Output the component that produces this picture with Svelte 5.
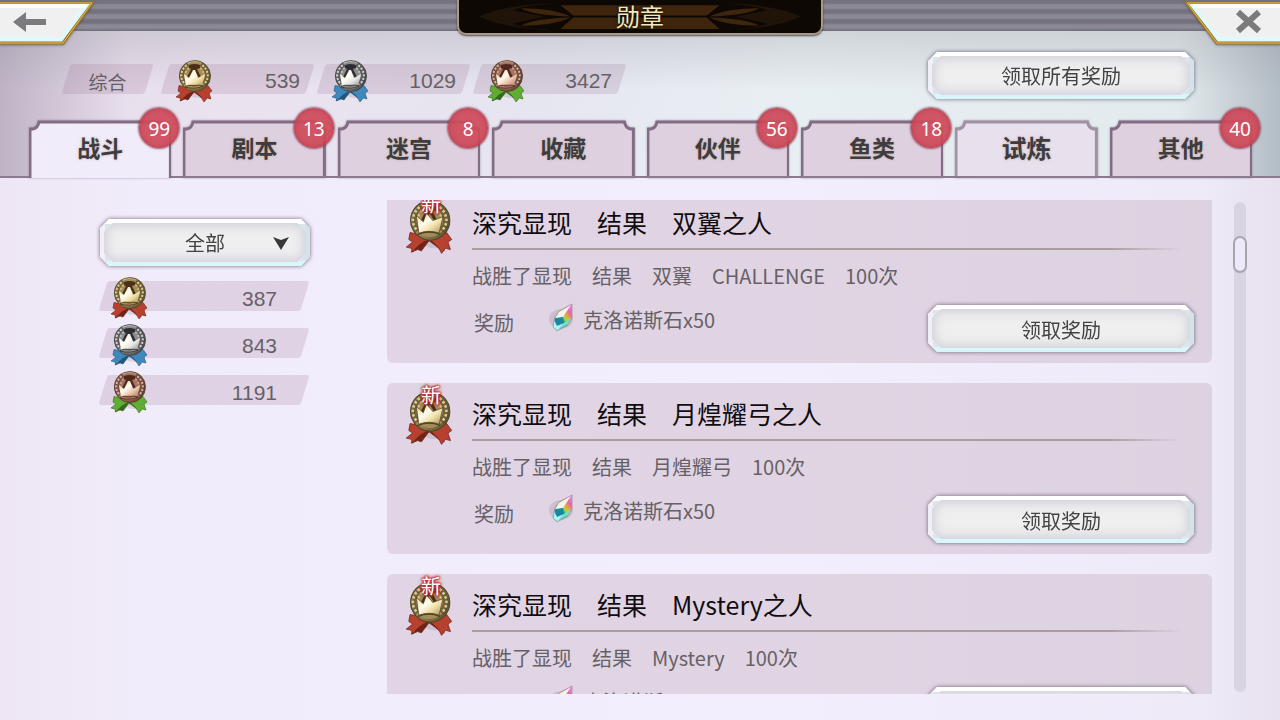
<script lang="ts">
	import { onMount } from "svelte";

	type Grade = "gold" | "silver" | "bronze";
	type Count = { grade: Grade; total: number };

	const totals: Count[] = [
		{ grade: "gold", total: 539 },
		{ grade: "silver", total: 1029 },
		{ grade: "bronze", total: 3427 },
	];

	const tabTotals: Count[] = [
		{ grade: "gold", total: 387 },
		{ grade: "silver", total: 843 },
		{ grade: "bronze", total: 1191 },
	];

	const tabs = [
		{ name: "战斗", unread: 99 },
		{ name: "剧本", unread: 13 },
		{ name: "迷宫", unread: 8 },
		{ name: "收藏", unread: 0 },
		{ name: "伙伴", unread: 56 },
		{ name: "鱼类", unread: 18 },
		{ name: "试炼", unread: 0, event: true },
		{ name: "其他", unread: 40 },
	];

	const medals = [
		{ title: "深究显现　结果　双翼之人", goal: "战胜了显现　结果　双翼　CHALLENGE　100次" },
		{ title: "深究显现　结果　月煌耀弓之人", goal: "战胜了显现　结果　月煌耀弓　100次" },
		{ title: "深究显现　结果　Mystery之人", goal: "战胜了显现　结果　Mystery　100次" },
	];

	const colors = {
		gold: { hi: "#f0dfa4", mid: "#a38c57", lo: "#4f4428", dark: "#4a3016", ribbon: "#b8402e", fold: "#6f2419" },
		silver: { hi: "#e6e6e6", mid: "#8b8b8b", lo: "#3c3c3e", dark: "#2e2e32", ribbon: "#3f88be", fold: "#235779" },
		bronze: { hi: "#ecc4ae", mid: "#a5735f", lo: "#54352b", dark: "#50291e", ribbon: "#5eae34", fold: "#35691c" },
	};

	let active = $state(0);
	let filter = $state("all");
	let list: HTMLElement;

	onMount(() => {
		list.scrollTop = 8;
	});
</script>

{#snippet medal(grade: Grade, big = false)}
	{@const c = colors[grade]}
	<svg class="medal" class:big viewBox="0 0 38 43" aria-hidden="true">
		<defs>
			<linearGradient id="disc-{grade}" x1="0" y1="0" x2="1" y2="1">
				<stop offset="0.1" stop-color={c.hi} />
				<stop offset="0.5" stop-color={c.mid} />
				<stop offset="1" stop-color={c.lo} />
			</linearGradient>
			<linearGradient id="crown-{grade}" x1="0" y1="0" x2="1" y2="1">
				<stop offset="0.1" stop-color={c.hi} />
				<stop offset="0.4" stop-color="#fffdf2" />
				<stop offset="0.65" stop-color={c.hi} />
				<stop offset="1" stop-color={c.mid} />
			</linearGradient>
		</defs>
		<ellipse cx="24" cy="32" rx="11" ry="6" fill="#54405c" opacity="0.14" />
		<g stroke={c.fold} stroke-width="0.6" stroke-linejoin="round">
			<path d="M18 30 L8 34 L5 41 L10 39 L13 40 L19 32Z" fill={c.fold} />
			<path d="M20 30 L28 33 L31 40 L27 38 L19 32Z" fill={c.fold} />
			<path d="M18 28 L4 25.500 L3 31 L6 33 L1 37 L5 38 L6 41 Q11 34 19 31Z" fill={c.ribbon} />
			<path d="M20 28 L33 25.500 L37 31 L34 33 L36 39 L32 38 L29 42 Q26 35 19 31Z" fill={c.ribbon} />
		</g>
		<circle cx="20" cy="16" r="15.500" fill="url(#disc-{grade})" stroke={c.lo} stroke-width="0.8" />
		<circle cx="19.500" cy="15.500" r="13.500" fill={c.mid} />
		<g fill="none">
			<path d="M10 24 C4 18 6 9 13 4 M29 24 C35 18 33 9 26 4" stroke={c.lo} stroke-width="5" opacity="0.6" />
			<path d="M9 23 C4 17 6 10 12 5 M30 23 C35 17 33 10 27 5" stroke={c.hi} stroke-width="2" stroke-dasharray="2 1.600" opacity="0.85" />
			<path d="M12 20 C9 16 10 10 15 7 M27 20 C30 16 29 10 24 7" stroke={c.hi} stroke-width="1.600" stroke-dasharray="1.800 2" opacity="0.7" />
		</g>
		<path d="M14 5 Q19.500 3 25 5 L25 8 L22 9 L26 17 L24 18 L20 11 L19 11 L14 18 L12 17 L16 9 L14 8Z" fill={c.dark} />
		{#if big}
			<path d="M9 12 L14.500 17 L17 10 L22 16 L30 13 L27 26 Q19 23 11 26Z" fill="url(#crown-{grade})" stroke={c.dark} stroke-width="0.5" />
			<path d="M10 27 Q19 23 28 27" fill="none" stroke={c.lo} stroke-width="1.200" />
		{:else}
			<path d="M9 14 L14 18 L18 10 H20 L23 18 L30 14 L27 26 Q19 23 11 26Z" fill="url(#crown-{grade})" />
			<path d="M10 27 Q13 24 19 26 Q24 24 28 26 Q20 30 10 27Z" fill={c.mid} stroke={c.dark} stroke-width="0.8" />
		{/if}
	</svg>
{/snippet}

<div class="page">
	<header>
		<div class="topbar">
			<button class="corner" aria-label="返回">
				<svg viewBox="0 0 96 46">
					<path d="M-4 3 H92 L63 43 H-4Z" fill="#f1f0f1" stroke="#9d7627" stroke-width="3" />
					<path d="M-4 3 H92 L63 43 H-4Z" fill="none" stroke="#e8bd4d" stroke-width="1" />
					<path d="M-4 6 H86 L61 39 H-4Z" fill="none" stroke="#dffafc" stroke-width="4" />
					<path d="M-4 6 H86" stroke="#fff" stroke-width="4" />
					<path d="M13 22 L26 12 V19 H46 V25 H26 V32Z" fill="#7b7b7d" />
				</svg>
			</button>
			<h1>
				<svg viewBox="0 0 364 32" preserveAspectRatio="none" aria-hidden="true">
					<g fill="#3f250c">
						<path d="M102 5 H262 L249 15 H115Z M115 17 H249 L262 28 H102Z" />
						<path d="M62 8 Q95 8 112 16 Q75 15 62 8Z M62 25 Q95 25 112 17 Q75 18 62 25Z" />
						<path d="M302 8 Q269 8 252 16 Q289 15 302 8Z M302 25 Q269 25 252 17 Q289 18 302 25Z" />
						<path d="M20 16 Q46 4 104 3 Q66 5 54 10 L86 16 L54 23 Q66 28 104 30 Q46 28 20 16Z" opacity="0.4" />
						<path d="M344 16 Q318 4 260 3 Q298 5 310 10 L278 16 L310 23 Q298 28 260 30 Q318 28 344 16Z" opacity="0.4" />
					</g>
				</svg>
				<span>勋章</span>
			</h1>
			<button class="corner" aria-label="关闭">
				<svg viewBox="0 0 96 46">
					<path d="M100 3 H3 L33 43 H100Z" fill="#f1f0f1" stroke="#9d7627" stroke-width="3" />
					<path d="M100 3 H3 L33 43 H100Z" fill="none" stroke="#e8bd4d" stroke-width="1" />
					<path d="M100 6 H9 L35 39 H100Z" fill="none" stroke="#dffafc" stroke-width="4" />
					<path d="M100 6 H9" stroke="#fff" stroke-width="4" />
					<path d="M54 12 L75 31 M75 12 L54 31" stroke="#7b7b7d" stroke-width="6" />
				</svg>
			</button>
		</div>

		<div class="summary">
			<span class="slant overall">综合</span>
			{#each totals as t}
				<span class="slant count">{@render medal(t.grade)}{t.total}</span>
			{/each}
			<button class="bevel claim">领取所有奖励</button>
		</div>

		<nav>
			{#each tabs as tab, i}
				<button class="tab" class:active={active === i} class:event={tab.event} onclick={() => (active = i)}>
					<svg viewBox="0 0 143 58" preserveAspectRatio="none" aria-hidden="true">
						<path d="M1 59 V9 H4 Q9 8 10 2 H133 Q134 8 139 9 H142 V59" />
					</svg>
					<span class="tab-name">{tab.name}</span>
					{#if tab.unread}
						<span class="unread">{tab.unread}</span>
					{/if}
				</button>
			{/each}
		</nav>
	</header>

	<main>
		<aside>
			<div class="bevel filter">
				<select bind:value={filter} aria-label="筛选">
					<option value="all">全部</option>
				</select>
				<svg viewBox="0 0 16 14" aria-hidden="true">
					<path d="M0 1 L8 4 L16 1 L8 14Z" fill="#39393b" />
				</svg>
			</div>
			{#each tabTotals as t}
				<span class="slant count">{@render medal(t.grade)}{t.total}</span>
			{/each}
		</aside>

		<section class="list" bind:this={list}>
			{#each medals as m}
				<article>
					<div class="award">
						{@render medal("gold", true)}
						<span class="new">新</span>
					</div>
					<div class="details">
						<h2>{m.title}</h2>
						<p>{m.goal}</p>
						<div class="reward">
							<span class="reward-label">奖励</span>
							<svg class="stone" viewBox="0 0 26 30" aria-hidden="true">
								<defs>
									<linearGradient id="stone" x1="1" y1="0" x2="0.2" y2="1">
										<stop offset="0.05" stop-color="#e58be6" />
										<stop offset="0.25" stop-color="#e564a8" />
										<stop offset="0.4" stop-color="#e8a63f" />
										<stop offset="0.5" stop-color="#b9d23a" />
										<stop offset="0.62" stop-color="#2fb85b" />
										<stop offset="0.8" stop-color="#1690b0" />
										<stop offset="1" stop-color="#a3f3ee" />
									</linearGradient>
								</defs>
								<ellipse cx="13" cy="17" rx="12" ry="10" fill="#6c5a70" opacity="0.18" />
								<path d="M24 2 L11 9 L7 15 L5 25 L9 29 L20 23 L24 16Z" fill="url(#stone)" stroke="#a6909d" stroke-width="0.8" />
								<path d="M23 3 L11 10 L7 16 L15 15Z" fill="#f1f4eb" />
								<path d="M7 17 L15 15 L16 21 L9 24Z" fill="#1a86a6" />
								<path d="M6 19 L9 24 L16 21 L10 28 L6 25Z" fill="#b3f5f0" />
								<path d="M16 21 L23 15 L20 22 L10 28Z" fill="#6fe0d4" />
							</svg>
							<span>克洛诺斯石x50</span>
							<button class="bevel claim">领取奖励</button>
						</div>
					</div>
				</article>
			{/each}
		</section>

		<div class="track"><div class="thumb"></div></div>
	</main>
</div>

<style>
	:global(body) {
		background: #f1ecfb;
	}

	.page {
		display: flex;
		flex-direction: column;
		height: 100vh;
		overflow: hidden;
		font-family: "Noto Sans CJK SC", sans-serif;
		font-size: 20px;
		color: #666166;
		background: linear-gradient(90deg, #eee6f4 0, #f1ecfb 12%, #f3eefd 60%, #eeeaf8 94%, #e8e1ee 100%);
	}

	button,
	select {
		border: 0;
		padding: 0;
		background: none;
		font: inherit;
		color: #434244;
		cursor: pointer;
	}

	header {
		background:
			linear-gradient(90deg, rgba(130, 120, 142, 0.4), transparent 10%, transparent 92%, rgba(125, 135, 148, 0.45)),
			linear-gradient(180deg, rgba(150, 150, 158, 0.3) 30px, transparent 90px),
			linear-gradient(100deg, #e5dae8 0, #ebe2ef 18%, #e6e5f0 40%, #e8eff3 62%, #e0e9ec 100%);
	}

	.topbar {
		display: flex;
		justify-content: space-between;
		align-items: flex-start;
		height: 31px;
		background: repeating-linear-gradient(180deg, #74727e 0, #74727e 3px, #8b8995 5px, #8b8995 8px, #74727e 10px);
	}

	.corner {
		width: 96px;
		height: 46px;
	}

	.corner svg {
		display: block;
		filter: drop-shadow(0 1px 1px rgba(60, 50, 60, 0.5));
	}

	h1 {
		position: relative;
		box-sizing: border-box;
		width: 366px;
		height: 35px;
		margin: 0;
		border: 2px solid #a89a86;
		border-top: 0;
		border-radius: 0 0 9px 9px;
		background: #0d0804;
		box-shadow: 0 1px 2px rgba(30, 20, 20, 0.7);
		font-size: 24px;
		font-weight: 400;
		line-height: 31px;
		text-align: center;
		color: #f2e9bd;
		text-shadow: 0 0 3px #000;
	}

	h1 svg {
		position: absolute;
		inset: 0;
		width: 100%;
		height: 100%;
	}

	h1 span {
		position: relative;
	}

	.summary {
		display: flex;
		align-items: center;
		gap: 11px;
		box-sizing: border-box;
		height: 89px;
		padding: 6px 85px 0 66px;
	}

	.slant {
		position: relative;
		z-index: 0;
		display: flex;
		align-items: center;
		justify-content: flex-end;
		box-sizing: border-box;
		height: 30px;
	}

	.slant::before {
		content: "";
		position: absolute;
		z-index: -1;
		inset: 0;
		border-radius: 3px;
		background: rgba(158, 118, 148, 0.22);
		transform: skewX(-17deg);
	}

	.overall {
		justify-content: center;
		width: 83px;
		margin-right: 5px;
		font-size: 19px;
		padding-top: 6px;
	}

	.count {
		width: 145px;
		padding: 5px 10px 0;
		font-family: "Liberation Sans", sans-serif;
		font-size: 21px;
	}

	.count .medal {
		margin-right: auto;
	}

	.medal {
		flex: none;
		width: 38px;
		height: 43px;
	}

	.medal.big {
		display: block;
		width: 48px;
		height: 55px;
	}

	.bevel {
		position: relative;
		z-index: 0;
		height: 49px;
		filter: drop-shadow(0 0 2px rgba(74, 56, 78, 0.75));
	}

	.bevel::before,
	.bevel::after {
		content: "";
		position: absolute;
		z-index: -1;
		clip-path: polygon(9px 0, calc(100% - 9px) 0, 100% 9px, 100% calc(100% - 9px), calc(100% - 9px) 100%, 9px 100%, 0 calc(100% - 9px), 0 9px);
	}

	.bevel::before {
		inset: 1px;
		border: 5px solid;
		border-color: #fff #d3e3ea #d9f6fa #f2eff7;
		background: #dce4ec;
	}

	.bevel::after {
		inset: 5px;
		background: #efeff0;
		box-shadow: inset 0 0 11px 3px #cfced9;
	}

	.claim {
		flex: none;
		width: 268px;
		margin-left: auto;
	}

	.summary .claim {
		margin-bottom: 6px;
	}

	nav {
		display: grid;
		grid-template-columns: repeat(8, 1fr);
		gap: 12px;
		padding: 0 28px 0 29px;
		box-shadow: inset 0 -2px #8b7b8f;
	}

	.tab {
		position: relative;
		height: 58px;
		padding-bottom: 4px;
		color: #403b3e;
		font-size: 23px;
		font-weight: 700;
	}

	.tab svg {
		position: absolute;
		inset: 0;
		width: 100%;
		height: 100%;
		filter: drop-shadow(0 0 1px rgba(100, 80, 105, 0.5));
	}

	.tab path {
		fill: #dfd0e0;
		stroke: #836d84;
		stroke-width: 3px;
		vector-effect: non-scaling-stroke;
	}

	.tab.active path {
		fill: #f1ecf9;
	}

	.tab.event path {
		fill: #e9e0ee;
		stroke: #a091a3;
	}

	.tab:not(.active)::after {
		content: "";
		position: absolute;
		inset: auto 0 0;
		height: 2px;
		background: #8b7b8f;
	}

	.tab-name {
		position: relative;
		text-shadow: 0 0 3px #bdb3a8;
	}

	.event .tab-name {
		font-size: 25px;
	}

	.unread {
		position: absolute;
		z-index: 1;
		top: -12px;
		right: -8px;
		width: 40px;
		height: 40px;
		border-radius: 50%;
		background: rgba(205, 74, 90, 0.93);
		box-shadow: 0 0 2px 1px rgba(120, 55, 75, 0.75), inset 0 0 5px rgba(170, 40, 60, 0.6);
		color: #fff;
		font-family: "Noto Sans", sans-serif;
		font-size: 19px;
		font-weight: 400;
		line-height: 43px;
	}

	main {
		display: flex;
		flex: 1;
		min-height: 0;
		padding: 22px 34px 26px 99px;
	}

	aside {
		display: flex;
		flex-direction: column;
		gap: 17px;
		flex: none;
		width: 212px;
		margin-right: 76px;
		padding-top: 18px;
	}

	aside .count {
		width: 202px;
		margin-left: 4px;
		padding-left: 7px;
		padding-right: 28px;
	}

	.filter {
		margin-bottom: -3px;
	}

	.filter select {
		width: 100%;
		height: 100%;
		appearance: none;
		text-align-last: center;
	}

	.filter svg {
		position: absolute;
		top: 18px;
		right: 22px;
		width: 16px;
		height: 14px;
		pointer-events: none;
	}

	.list {
		flex: 1;
		min-width: 0;
		overflow-y: auto;
		scrollbar-width: none;
	}

	article {
		display: flex;
		box-sizing: border-box;
		height: 171px;
		padding: 8px 17px 10px 18px;
		border-radius: 6px;
		background: linear-gradient(90deg, #e1d5e5, #e0d4e3 60%, #dcd2e0);
	}

	article + article {
		margin-top: 20px;
	}

	.award {
		position: relative;
		flex: none;
		width: 67px;
	}

	.new {
		position: absolute;
		top: -10px;
		left: 16px;
		color: #fff;
		line-height: 28px;
		text-shadow: 0 0 2px #b82c30, 0 0 2px #b82c30, 0 0 2px #b82c30, 0 0 3px #b82c30, 0 0 4px #b82c30;
	}

	.details {
		flex: 1;
	}

	h2 {
		margin: 0;
		padding-bottom: 4px;
		border-bottom: 2px solid;
		border-image: linear-gradient(90deg, #a99da0 88%, transparent 98%) 1;
		color: #100c10;
		font-size: 25px;
		font-weight: 400;
		line-height: 44px;
	}

	p {
		margin: 0;
		line-height: 52px;
	}

	.reward {
		display: flex;
		align-items: flex-start;
		line-height: 28px;
	}

	.reward-label {
		margin: 7px 34px 0 2px;
	}

	.stone {
		width: 26px;
		height: 30px;
		margin-right: 9px;
	}

	.reward > span:not(.reward-label) {
		padding-top: 4px;
	}

	.reward .claim {
		margin-top: 2px;
		padding-top: 2px;
	}

	.track {
		flex: none;
		width: 12px;
		margin: 2px 0 2px 22px;
		border-radius: 6px;
		background: #d8d4e0;
	}

	.thumb {
		box-sizing: border-box;
		width: 14px;
		height: 37px;
		margin: 34px -1px;
		border: 2px solid #aaa3b2;
		border-radius: 7px;
		background: #eee8fb;
	}
</style>
